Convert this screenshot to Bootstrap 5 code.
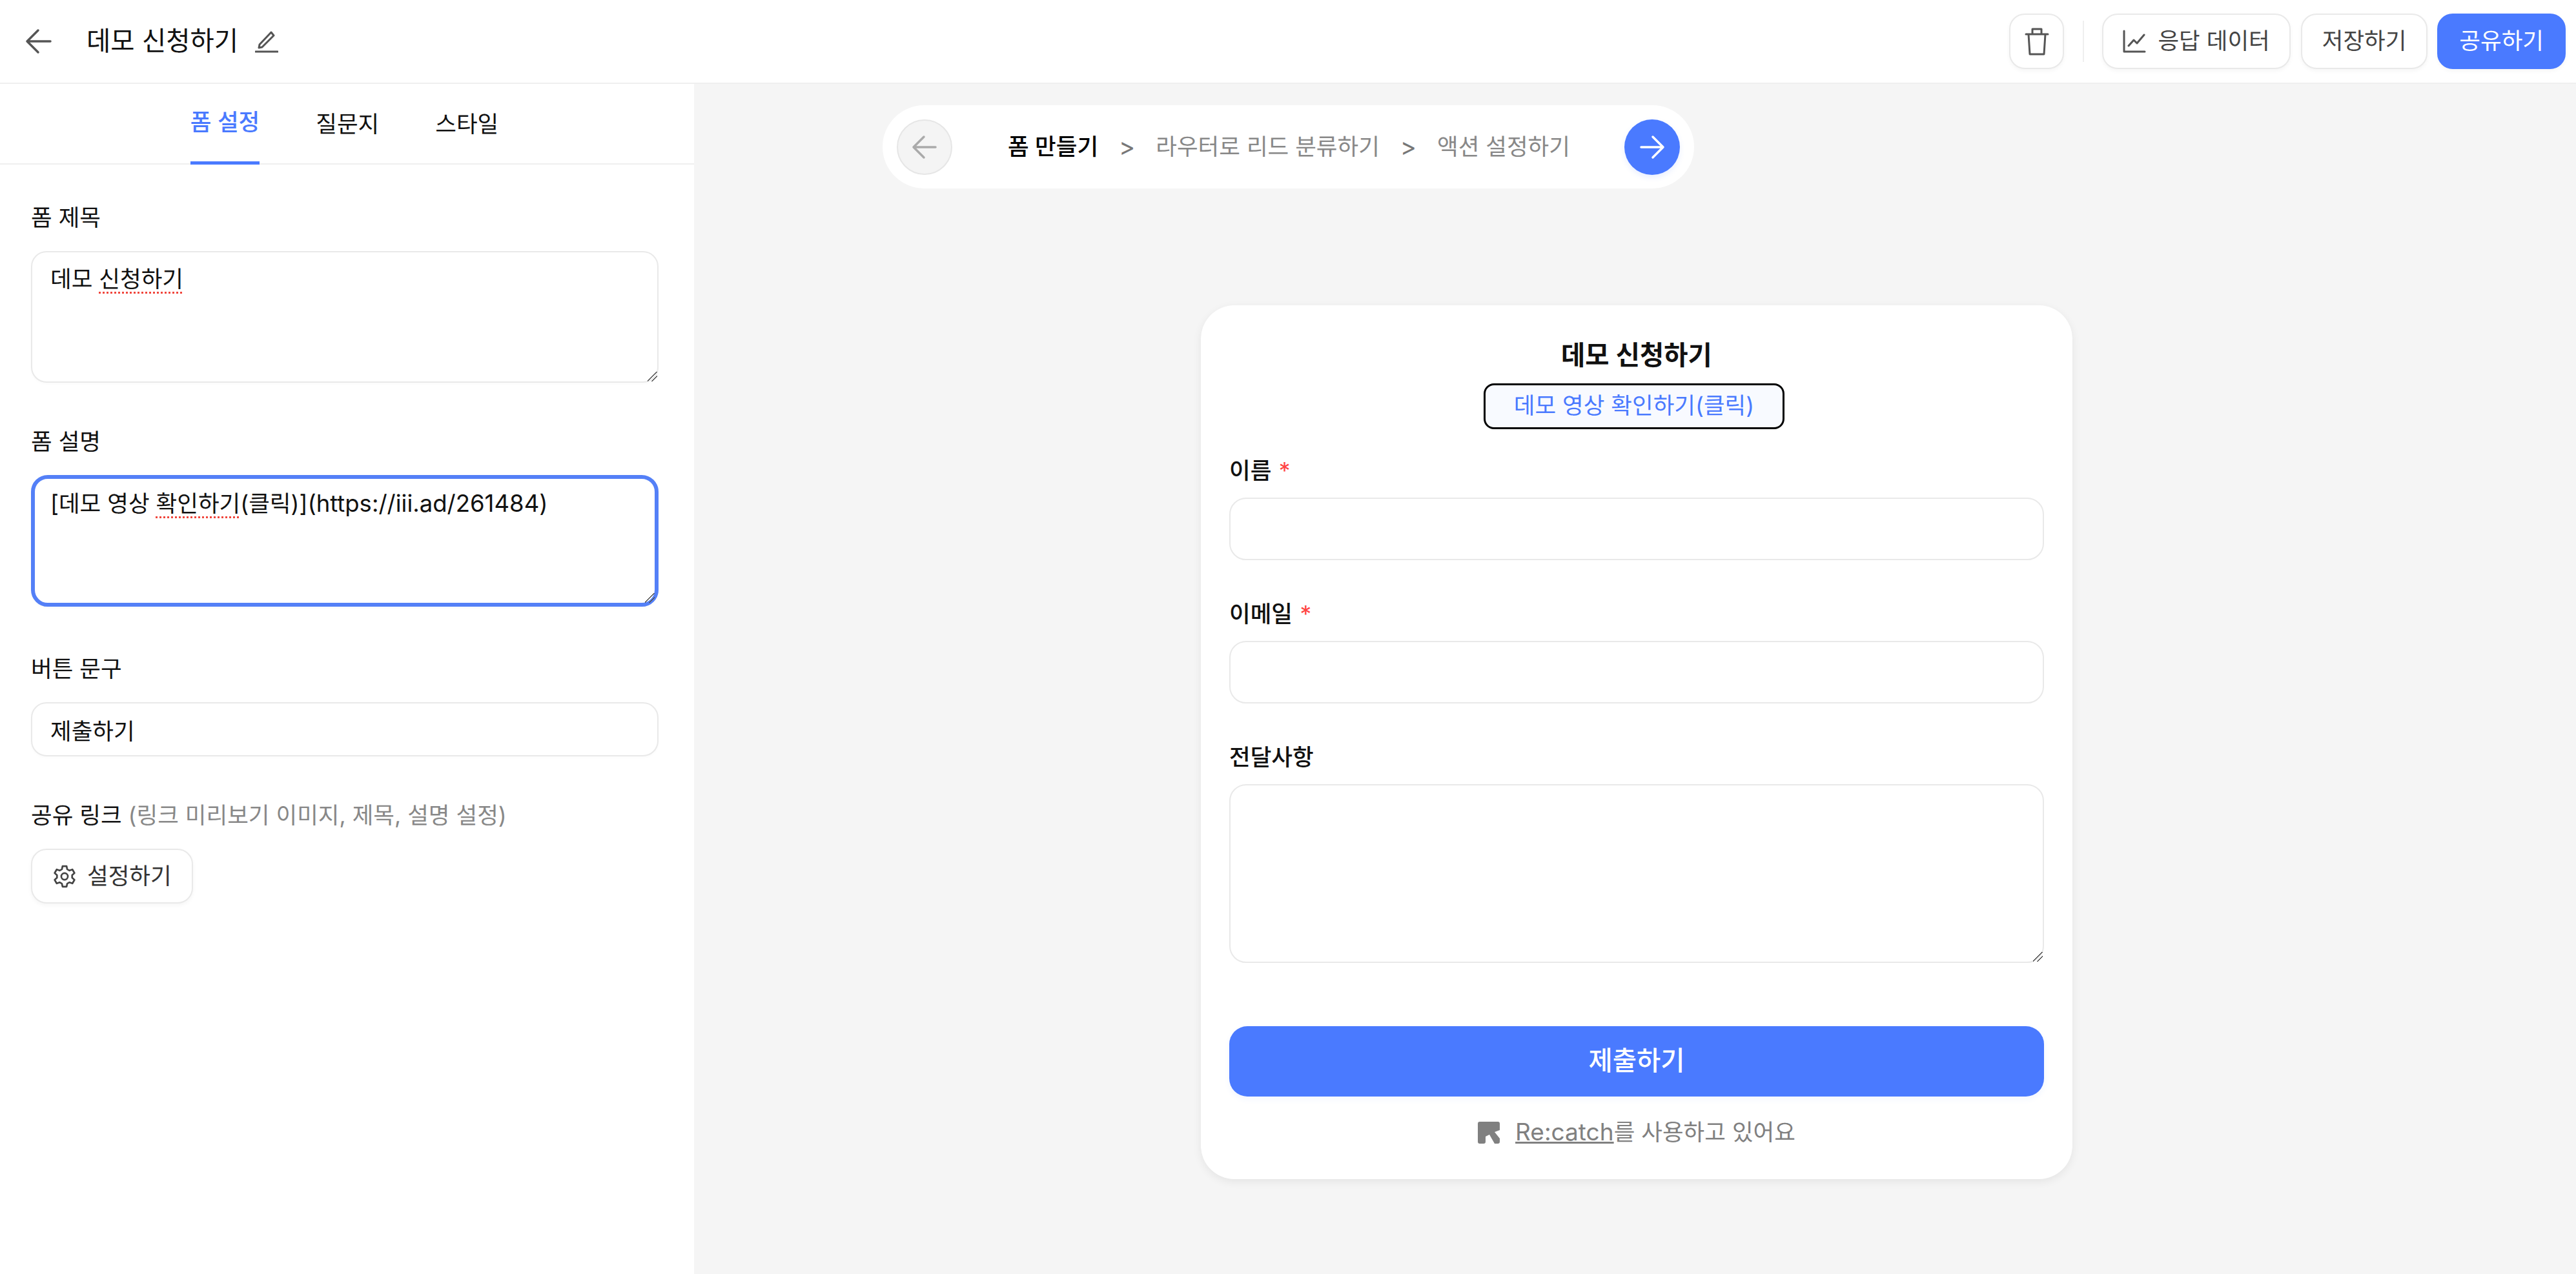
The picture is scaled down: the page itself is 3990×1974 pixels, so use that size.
<!DOCTYPE html>
<html lang="ko">
<head>
  <meta charset="UTF-8">
  <meta name="viewport" content="width=device-width, initial-scale=1.0">
  <title>데모 신청하기</title>
  <link href="https://cdn.jsdelivr.net/npm/bootstrap@5.3.0/dist/css/bootstrap.min.css" rel="stylesheet">
  <style>
    :root { --brand: #4a7aff; --line: #e9e9e9; }
    body {
      background-color: #f5f5f5;
      font-family: Inter, "Noto Sans CJK KR", sans-serif;
      font-size: 35.5px;
      color: #111;
      min-height: 100vh;
    }
    svg { display: block; flex: none; }
    ::-webkit-resizer {
      background: linear-gradient(135deg, transparent 0 46%, #555 46% 52%, transparent 52% 68%, #555 68% 74%, transparent 74%);
    }

    .top-bar {
      height: 130px;
      background: #fff;
      border-bottom: 2px solid #efefef;
      padding: 0 16px 0 38px;
    }
    .doc-title { font-size: 40.5px; margin: 0 26px 0 52px; font-weight: 400; }
    .bar-btn {
      height: 86px;
      font-size: 35.5px;
      color: #444;
      background: #fff;
      border: 2px solid var(--line);
      border-radius: 24px;
      padding: 0 30px;
      box-shadow: 0 3px 6px rgba(0, 0, 0, .04);
      display: flex;
      align-items: center;
    }
    .bar-btn.blue { background: var(--brand); border-color: var(--brand); color: #fff; margin-left: 15px; padding: 0 32px; }
    .bar-btn.plain { margin-left: 16px; padding: 0 31px; }
    .chart-btn { gap: 18px; }
    .trash-btn { width: 85px; padding: 0; justify-content: center; }
    .bar-sep { width: 2px; height: 64px; background: #efefef; margin: 0 28px 0 29px; }

    .side-panel { width: 1075px; background: #fff; flex: none; }
    .tab-row { height: 125px; border-bottom: 2px solid #efefef; gap: 87px; padding-right: 8px; }
    .tab-row .nav-link {
      height: 125px;
      padding: 0;
      display: flex;
      align-items: center;
      color: #111;
      font-size: 35.5px;
    }
    .tab-row .nav-link.active { color: var(--brand); border-bottom: 5px solid var(--brand); font-weight: 500; }

    .side-form { padding: 58px 55px 0 48px; }
    .field-group { margin-bottom: 67px; }
    .field-group.wide-gap { margin-bottom: 72px; }
    .field-label { display: block; font-size: 35.5px; line-height: 50px; margin-bottom: 26px; }
    .field-label .hint { color: #888; }
    .box-input.form-control {
      font-size: 35.5px;
      line-height: 48px;
      color: #111;
      border: 2px solid var(--line);
      border-radius: 24px;
      padding: 18px 28px;
      box-shadow: 0 2px 4px rgba(0, 0, 0, .02);
    }
    .box-area { height: 204px; overflow: auto; resize: vertical; }
    .box-area.focused { border: 6px solid #5480f7; border-radius: 26px; padding: 14px 24px; }
    .box-line { height: 84px; }
    .url-part { font-size: 36.5px; }
    .spell { text-decoration: underline dotted #f0463c 3px; text-underline-offset: 7px; }
    .gear-btn { height: 85px; padding: 0 31px; gap: 16px; color: #333; }

    .work-area { padding: 33px 0 0 5px; min-width: 0; }
    .step-pill {
      width: 1257px;
      height: 129px;
      margin-left: 287px;
      background: #fff;
      border-radius: 65px;
      padding: 0 22px;
    }
    .step-round { width: 86px; height: 86px; border-radius: 50%; display: flex; align-items: center; justify-content: center; flex: none; }
    .step-round.off { background: #f4f4f4; border: 2px solid #e6e6e6; }
    .step-round.on { background: var(--brand); box-shadow: 0 4px 8px rgba(74, 122, 255, .12); }
    .step-list { flex-grow: 1; padding-left: 86px; color: #888; font-size: 35.5px; white-space: nowrap; }
    .step-list .now { color: #000; font-weight: 500; }
    .step-list .arrow { margin: 0 32px 0 32px; color: #777; font-size: 38px; }

    .form-sheet {
      width: 1350px;
      margin: 181px auto 0;
      padding: 48px 44px 0;
      height: 1354px;
      background: #fff;
      border: 0;
      border-radius: 52px;
      box-shadow: 0 4px 14px rgba(0, 0, 0, .07);
    }
    .sheet-title { font-size: 40.5px; font-weight: 600; line-height: 60px; margin: 0 0 13px; text-align: center; }
    .video-link {
      display: block;
      width: 466px;
      height: 71px;
      margin: 0 0 40px 394px;
      border: 3px solid #000;
      border-radius: 16px;
      background: #f8faff;
      color: var(--brand);
      font-size: 35.5px;
      line-height: 63px;
      text-align: center;
      text-decoration: none;
      white-space: nowrap;
    }
    .sheet-field { margin-bottom: 59px; }
    .sheet-label { display: block; font-size: 35.5px; font-weight: 500; line-height: 50px; margin-bottom: 16px; }
    .sheet-label i { color: #f44; font-style: normal; font-weight: 400; margin-left: 2px; }
    .sheet-input.form-control { height: 97px; border: 2px solid var(--line); border-radius: 26px; }
    .sheet-area.form-control { height: 277px; border: 2px solid var(--line); border-radius: 26px; resize: vertical; }
    .send-btn.btn {
      width: 100%;
      height: 109px;
      background: var(--brand);
      border: 0;
      border-radius: 28px;
      color: #fff;
      font-size: 40.5px;
      font-weight: 500;
      margin-top: 98px;
      box-shadow: 0 4px 8px rgba(74, 122, 255, .08);
    }
    .made-with { color: #808080; font-size: 35.5px; margin-top: 30px; gap: 24px; line-height: 50px; }
    .made-with a { color: #808080; font-size: 37px; }
  </style>
</head>
<body class="d-flex flex-column">

  <!-- top bar -->
  <header class="top-bar d-flex align-items-center">
    <svg width="44" height="40" viewBox="0 0 44 40" fill="none" stroke="#555" stroke-width="3.5" stroke-linecap="round" stroke-linejoin="round"><path d="M40 20H5M21 3 4 20l17 17"/></svg>
    <h1 class="doc-title">데모 신청하기</h1>
    <svg width="36" height="36" viewBox="0 0 36 36" fill="none" stroke="#555" stroke-width="3" stroke-linecap="round" stroke-linejoin="round"><path d="M7 23 6 28l5-1L29 9l-4-5ZM1 34h34"/></svg>
    <div class="ms-auto d-flex align-items-center">
      <button type="button" class="bar-btn trash-btn" aria-label="삭제">
        <svg width="38" height="44" viewBox="0 0 38 44" fill="none" stroke="#555" stroke-width="3" stroke-linecap="round" stroke-linejoin="round"><path d="M2 11h34M12 11V3h14v8M6 11l2 31h22l2-31"/></svg>
      </button>
      <span class="bar-sep"></span>
      <button type="button" class="bar-btn chart-btn">
        <svg width="36" height="36" viewBox="0 0 36 36" fill="none" stroke="#555" stroke-width="3" stroke-linecap="round" stroke-linejoin="round"><path d="M2 2v32h32M9 25l8-9 5 5 11-13"/></svg>
        응답 데이터
      </button>
      <button type="button" class="bar-btn plain">저장하기</button>
      <button type="button" class="bar-btn blue">공유하기</button>
    </div>
  </header>

  <div class="d-flex flex-grow-1">
    <!-- left settings -->
    <aside class="side-panel">
      <ul class="nav tab-row justify-content-center">
        <li class="nav-item"><a class="nav-link active" href="#">폼 설정</a></li>
        <li class="nav-item"><a class="nav-link" href="#">질문지</a></li>
        <li class="nav-item"><a class="nav-link" href="#">스타일</a></li>
      </ul>
      <form class="side-form">
        <div class="field-group">
          <label class="field-label">폼 제목</label>
          <div class="form-control box-input box-area" contenteditable="true">데모 <span class="spell">신청하기</span></div>
        </div>
        <div class="field-group wide-gap">
          <label class="field-label">폼 설명</label>
          <div class="form-control box-input box-area focused" contenteditable="true">[데모 영상 <span class="spell">확인하기</span>(클릭)]<span class="url-part">(https://iii.ad/261484)</span></div>
        </div>
        <div class="field-group">
          <label class="field-label">버튼 문구</label>
          <input type="text" class="form-control box-input box-line" value="제출하기">
        </div>
        <div>
          <label class="field-label">공유 링크 <span class="hint">(링크 미리보기 이미지, 제목, 설명 설정)</span></label>
          <button type="button" class="bar-btn gear-btn">
            <svg width="38" height="40" viewBox="0 0 24 24" fill="none" stroke="#444" stroke-width="1.7" stroke-linecap="round" stroke-linejoin="round"><path d="M10 2h4l.6 3 2.2 1.2 2.9-1 2 3.5-2.3 2v2.6l2.3 2-2 3.5-2.9-1-2.2 1.2-.6 3h-4l-.6-3-2.2-1.2-2.9 1-2-3.5 2.3-2v-2.6l-2.3-2 2-3.5 2.9 1L9.4 5Z"/><circle cx="12" cy="12" r="3.2"/></svg>
            설정하기
          </button>
        </div>
      </form>
    </aside>

    <!-- preview -->
    <main class="work-area flex-grow-1">
      <nav class="step-pill d-flex align-items-center">
        <span class="step-round off">
          <svg width="40" height="38" viewBox="0 0 40 38" fill="none" stroke="#aaa" stroke-width="3.5" stroke-linecap="round" stroke-linejoin="round"><path d="M37 19H3M19 3 3 19l16 16"/></svg>
        </span>
        <div class="step-list d-flex align-items-center">
          <span class="now">폼 만들기</span><span class="arrow">&gt;</span><span>라우터로 리드 분류하기</span><span class="arrow">&gt;</span><span>액션 설정하기</span>
        </div>
        <span class="step-round on">
          <svg width="40" height="38" viewBox="0 0 40 38" fill="none" stroke="#fff" stroke-width="3.5" stroke-linecap="round" stroke-linejoin="round"><path d="M3 19h34M21 3l16 16-16 16"/></svg>
        </span>
      </nav>

      <section class="card form-sheet">
        <h2 class="sheet-title">데모 신청하기</h2>
        <a class="video-link" href="#">데모 영상 확인하기(클릭)</a>
        <div class="sheet-field">
          <label class="sheet-label">이름 <i>*</i></label>
          <input type="text" class="form-control sheet-input">
        </div>
        <div class="sheet-field">
          <label class="sheet-label">이메일 <i>*</i></label>
          <input type="text" class="form-control sheet-input">
        </div>
        <div>
          <label class="sheet-label">전달사항</label>
          <textarea class="form-control sheet-area"></textarea>
        </div>
        <button type="button" class="btn send-btn">제출하기</button>
        <div class="made-with d-flex justify-content-center align-items-center">
          <svg width="34" height="34" viewBox="0 0 34 34" fill="#808080"><path d="M3 0h28a3 3 0 0 1 3 3v10l-8 3 8 10v5a3 3 0 0 1-3 3h-5l-8-14-6 3v8a3 3 0 0 1-3 3H3a3 3 0 0 1-3-3V3a3 3 0 0 1 3-3Z"/></svg>
          <span><a href="#">Re:catch</a>를 사용하고 있어요</span>
        </div>
      </section>
    </main>
  </div>

  <script src="https://cdn.jsdelivr.net/npm/bootstrap@5.3.0/dist/js/bootstrap.bundle.min.js"></script>
</body>
</html>
